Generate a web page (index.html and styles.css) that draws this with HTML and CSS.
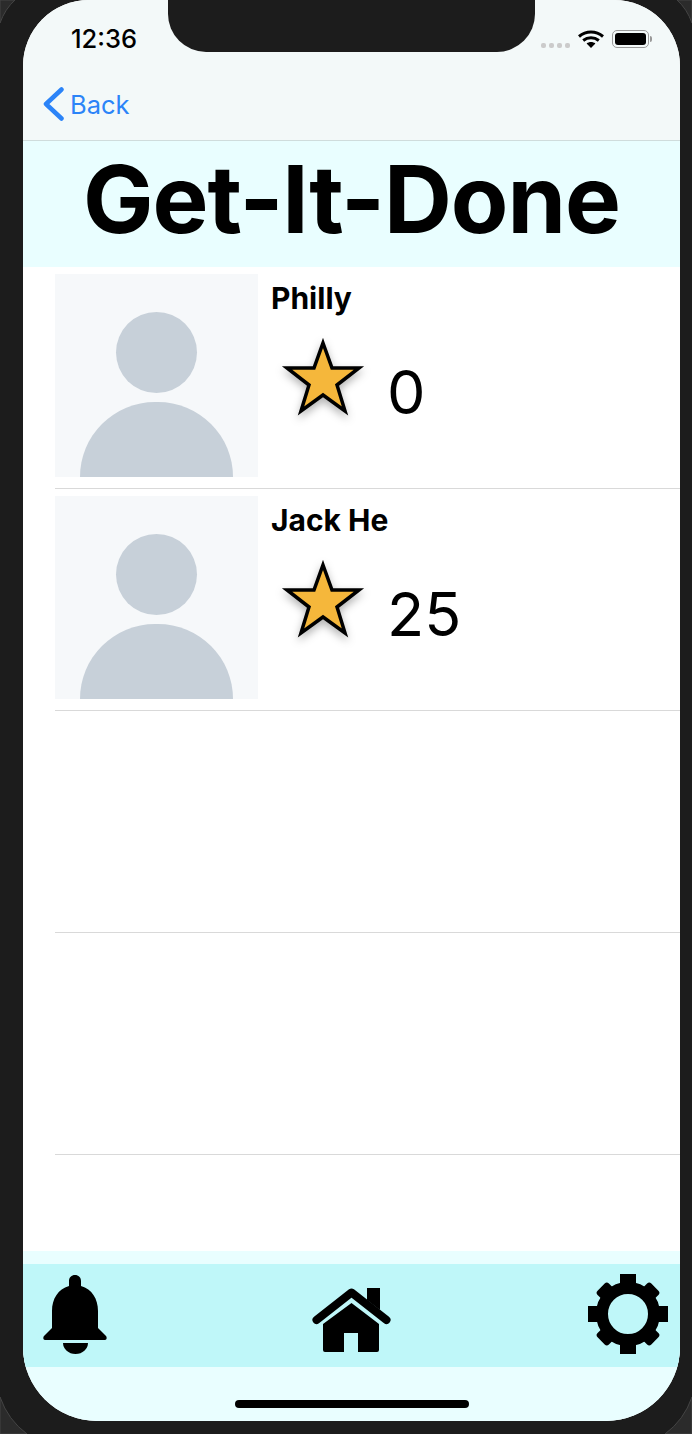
FILE: index.html
```html
<!DOCTYPE html>
<html lang="en">
<head>
    <meta charset="UTF-8">
    <meta name="viewport" content="width=device-width, initial-scale=1.0">
    <title>Get-It-Done</title>
    <link rel="stylesheet" href="styles.css">
</head>
<body>
    <!-- edge of the phone body, only shows in the corners -->
    <svg class="bezel" viewBox="0 0 692 1434" width="692" height="1434">
        <path d="M0 0H15Q5 9 0 23z"/>
        <path d="M692 0H677Q687 9 692 23z"/>
        <path d="M0 1434V1397Q8 1420 27 1434z"/>
        <path d="M692 1434V1397Q684 1420 665 1434z"/>
    </svg>

    <div class="screen">
        <div class="notch"></div>

        <header class="topbar">
            <div class="status">
                <span class="time">12:36</span>
                <div class="status-icons">
                    <div class="signal"><i></i><i></i><i></i><i></i></div>
                    <svg class="wifi" viewBox="0 0 26 18" width="26" height="18">
                        <path d="M1 6.5C8 .5 18 .5 25 6.5" fill="none" stroke="#000" stroke-width="3"/>
                        <path d="M5.2 10.5C9.8 6.8 16.2 6.8 20.8 10.5" fill="none" stroke="#000" stroke-width="3"/>
                        <path d="M8.6 13.6L13 18l4.4-4.4C14.8 11.6 11.2 11.6 8.6 13.6z"/>
                    </svg>
                    <div class="battery"><div class="battery-fill"></div></div>
                </div>
            </div>
            <a class="back" href="#">
                <svg viewBox="0 0 21 34" width="21" height="34">
                    <path d="M18.5 2.5L3 17l15.5 14.5" fill="none" stroke="#2b84f8" stroke-width="4.5" stroke-linecap="round" stroke-linejoin="round"/>
                </svg>
                <span>Back</span>
            </a>
        </header>

        <h1 class="title">Get-It-Done</h1>

        <main class="list">
            <div class="row">
                <div class="avatar"><div class="head"></div><div class="shoulders"></div></div>
                <div class="info">
                    <div class="name">Philly</div>
                    <div class="score">
                        <svg class="star" viewBox="0 0 82 80" width="82" height="80">
                            <polygon points="41,5 50,30 77,30 55,47 63,73 41,57 19,73 27,47 5,30 32,30"/>
                        </svg>
                        <span class="points">0</span>
                    </div>
                </div>
            </div>
            <div class="row">
                <div class="avatar"><div class="head"></div><div class="shoulders"></div></div>
                <div class="info">
                    <div class="name">Jack He</div>
                    <div class="score">
                        <svg class="star" viewBox="0 0 82 80" width="82" height="80">
                            <polygon points="41,5 50,30 77,30 55,47 63,73 41,57 19,73 27,47 5,30 32,30"/>
                        </svg>
                        <span class="points">25</span>
                    </div>
                </div>
            </div>
            <div class="row"></div>
            <div class="row"></div>
        </main>

        <footer class="footer">
            <nav class="tabs">
                <svg viewBox="0 0 64 79" width="64" height="79">
                    <path d="M32 0c-3.500 0-6 2.500-6 6v5C15 14 9 24 9 36v17L1 61c-1 1-1 4 1 4h60c2 0 2-3 1-4l-8-8V36c0-12-6-22-17-25V6c0-3.500-2.500-6-6-6z"/>
                    <path d="M20 68h25c0 6-5.500 11-12.500 11S20 74 20 68z"/>
                </svg>
                <svg class="home" viewBox="0 0 79 65" width="79" height="65">
                    <path d="M55 0h13v22l-13-10z"/>
                    <path d="M4.500 32L39.500 4.500 74.500 32" fill="none" stroke="#000" stroke-width="8" stroke-linecap="round" stroke-linejoin="round"/>
                    <path d="M39.500 15L67 36v26a2 2 0 0 1-2 2H46V45H32v19H13a2 2 0 0 1-2-2V36z"/>
                </svg>
                <svg viewBox="-40 -40 80 80" width="80" height="80">
                    <circle r="26" fill="none" stroke="#000" stroke-width="12"/>
                    <rect class="tooth" x="-8" y="-40" width="16" height="14"/>
                    <rect class="tooth" x="-8" y="-40" width="16" height="14" transform="rotate(90)"/>
                    <rect class="tooth" x="-8" y="-40" width="16" height="14" transform="rotate(180)"/>
                    <rect class="tooth" x="-8" y="-40" width="16" height="14" transform="rotate(270)"/>
                    <rect class="tooth" x="-8" y="-38" width="16" height="14" rx="3" transform="rotate(45)"/>
                    <rect class="tooth" x="-8" y="-38" width="16" height="14" rx="3" transform="rotate(135)"/>
                    <rect class="tooth" x="-8" y="-38" width="16" height="14" rx="3" transform="rotate(225)"/>
                    <rect class="tooth" x="-8" y="-38" width="16" height="14" rx="3" transform="rotate(315)"/>
                </svg>
            </nav>
            <div class="home-bar"></div>
        </footer>
    </div>
</body>
</html>
```
FILE: styles.css
```css
html, body { margin: 0; height: 100%; }
body { background: #1c1c1c; font-family: Inter, "Liberation Sans", sans-serif; color: #000; overflow: hidden; }

.bezel { position: absolute; top: 0; left: 0; }
.bezel path { fill: #2b2b2b; stroke: #444; stroke-width: 1; }

.screen { position: relative; display: flex; flex-direction: column; width: 657px; height: 1421px; margin-left: 23px; background: #fff; border-radius: 66px 66px 74px 74px; overflow: hidden; }
.notch { position: absolute; top: 0; left: 145px; width: 367px; height: 52px; background: #1c1c1c; border-radius: 0 0 38px 38px; }

.topbar { height: 140px; background: #f3f9f9; border-bottom: 1px solid #cfdcdc; }
.status { display: flex; justify-content: space-between; height: 78px; padding: 0 31px 0 48px; }
.time { margin-top: 24px; font-size: 25.500px; line-height: 30px; font-weight: 500; }
.status-icons { display: flex; align-items: flex-start; gap: 8px; margin-top: 30px; }
.signal { display: flex; gap: 3px; margin-top: 13px; }
.signal i { width: 5px; height: 5px; border-radius: 2px; background: #cbcbcb; }
.battery { position: relative; box-sizing: border-box; width: 37px; height: 18px; padding: 2px; border: 1px solid #999; border-radius: 5px; }
.battery::after { content: ""; position: absolute; right: -4px; top: 5px; width: 2px; height: 6px; background: #999; border-radius: 0 2px 2px 0; }
.battery-fill { height: 100%; background: #000; border-radius: 3px; }

.back { display: flex; align-items: center; gap: 6px; margin-left: 20px; height: 52px; font-size: 25.500px; color: #2b84f8; text-decoration: none; }

.title { margin: 0; height: 126px; background: #e9feff; font-size: 94px; line-height: 116px; font-weight: 700; text-align: center; letter-spacing: -1px; }

.list { flex: 1; }
.row { display: flex; box-sizing: border-box; height: 222px; margin-left: 32px; padding-top: 7px; border-bottom: 1px solid #d9d9d9; }
.avatar { display: flex; flex-direction: column; align-items: center; gap: 9px; box-sizing: border-box; width: 203px; height: 203px; padding-top: 38px; background: #f6f8fa; }
.head { width: 81px; height: 81px; border-radius: 50%; background: #c7d0d9; }
.shoulders { width: 153px; height: 75px; border-radius: 77px 77px 0 0; background: #c7d0d9; }
.info { margin-left: 13px; }
.name { margin-top: 6px; font-size: 30px; line-height: 36px; font-weight: 700; }
.score { display: flex; align-items: flex-start; margin: 22px 0 0 11px; }
.star { overflow: visible; filter: drop-shadow(0 4px 4px rgba(0, 0, 0, 0.3)); }
.star polygon { fill: #f5b73b; stroke: #000; stroke-width: 3.500; stroke-miterlimit: 10; }
.points { margin: 18px 0 0 23px; font-size: 61px; line-height: 72px; }

.footer { height: 170px; padding-top: 13px; box-sizing: border-box; background: #e9feff; }
.tabs { display: flex; justify-content: space-between; align-items: center; height: 103px; padding: 0 12px 0 20px; background: #bff7f9; }
.tabs svg { margin-bottom: 3px; }
.tabs .home { margin: 9px 0 0 7px; }
.tooth { fill: #000; }
.home-bar { width: 234px; height: 8px; margin: 33px 0 0 212px; border-radius: 4px; background: #000; }
```
